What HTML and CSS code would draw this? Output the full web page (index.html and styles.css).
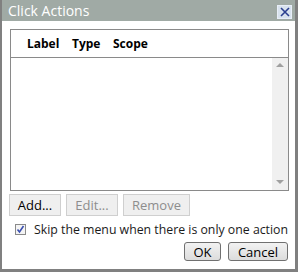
FILE: index.html
```html
<!DOCTYPE html>
<html lang="en">
<head>
    <meta charset="UTF-8">
    <title>Click Actions</title>
    <link rel="stylesheet" href="styles.css">
</head>
<body>
    <div class="window">
        <div class="titlebar">
            <span class="title">Click Actions</span>
            <span class="close">
                <svg width="10" height="10" viewBox="0 0 10 10"><path d="M1 1L9 9M9 1L1 9" stroke="#2b3f8f" stroke-width="1.6"/></svg>
            </span>
        </div>
        <div class="content">
            <div class="list">
                <div class="list-head">
                    <span class="col-label">Label</span>
                    <span class="col-type">Type</span>
                    <span class="col-scope">Scope</span>
                </div>
                <div class="list-body">
                    <div class="rows"></div>
                    <div class="scrollbar">
                        <span class="arrow up"></span>
                        <span class="arrow down"></span>
                    </div>
                </div>
            </div>
            <div class="actions">
                <button>Add...</button>
                <button disabled>Edit...</button>
                <button class="wide" disabled>Remove</button>
            </div>
            <label class="check">
                <span class="box">
                    <svg width="9" height="9" viewBox="0 0 9 9"><path d="M1.5 4.5L3.5 7L7.5 1" fill="none" stroke="#3a4fb0" stroke-width="1.6"/></svg>
                </span>
                <span>Skip the menu when there is only one action</span>
            </label>
            <div class="footer">
                <button class="small">OK</button>
                <button class="small cancel">Cancel</button>
            </div>
        </div>
    </div>
</body>
</html>
```

FILE: styles.css
```css
* {
    box-sizing: border-box;
    margin: 0;
    padding: 0;
}
body {
    font-family: "Open Sans", sans-serif;
    background-color: #fff;
}
.window {
    width: 298px;
    height: 272px;
    border-left: 2px solid #808080;
    border-right: 3px solid #808080;
    border-bottom: 3px solid #808080;
    display: flex;
    flex-direction: column;
}
.titlebar {
    height: 21px;
    background-color: #a0aaa5;
    display: flex;
    align-items: center;
    justify-content: space-between;
    padding: 0 3px 0 6px;
}
.title {
    color: #fff;
    font-size: 14px;
}
.close {
    width: 15px;
    height: 14px;
    border: 1px solid #e8eef8;
    background-color: #d8e2ee;
    display: flex;
    align-items: center;
    justify-content: center;
    margin-top: 2px;
}
.content {
    flex: 1;
    background-color: #fff;
    padding: 8px 6px 0 8px;
}
.list {
    height: 162px;
    border: 1px solid #8a8a8a;
    display: flex;
    flex-direction: column;
}
.list-head {
    height: 28px;
    border-bottom: 1px solid #8a8a8a;
    display: flex;
    align-items: center;
    font-size: 12px;
    font-weight: bold;
    padding-left: 16px;
}
.col-label {
    width: 45px;
}
.col-type {
    width: 41px;
}
.list-body {
    flex: 1;
    display: flex;
}
.rows {
    flex: 1;
}
.scrollbar {
    width: 16px;
    background-color: #f0f0f0;
    display: flex;
    flex-direction: column;
    justify-content: space-between;
    align-items: center;
    padding: 5px 0 6px;
}
.arrow {
    width: 0;
    height: 0;
    border-left: 4px solid transparent;
    border-right: 4px solid transparent;
}
.arrow.up {
    border-bottom: 4px solid #a0a0a0;
}
.arrow.down {
    border-top: 4px solid #a0a0a0;
}
.actions {
    display: flex;
    gap: 5px;
    margin-top: 3px;
    margin-left: -1px;
}
button {
    font-family: "Open Sans", sans-serif;
    font-size: 13px;
    height: 22px;
    width: 52px;
    background-color: #efefef;
    border: 1px solid #cfcfcf;
    color: #000;
}
button:disabled {
    color: #8d8d8d;
}
button.wide {
    width: 67px;
}
.check {
    display: flex;
    align-items: center;
    gap: 8px;
    font-size: 12.3px;
    white-space: nowrap;
    margin-top: 5px;
    padding-left: 5px;
    color: #1a1a1a;
}
.box {
    width: 11px;
    height: 11px;
    border: 1px solid #8a8a8a;
    background-color: #f4f4f4;
    display: flex;
    align-items: center;
    justify-content: center;
}
.footer {
    display: flex;
    justify-content: flex-end;
    gap: 7px;
    margin-top: 4px;
    padding-right: 1px;
}
button.small {
    height: 19px;
    width: 37px;
    border: 1px solid #707070;
    border-radius: 3px;
    background: linear-gradient(#f2f2f2, #dcdcdc);
}
button.cancel {
    width: 60px;
}
```
